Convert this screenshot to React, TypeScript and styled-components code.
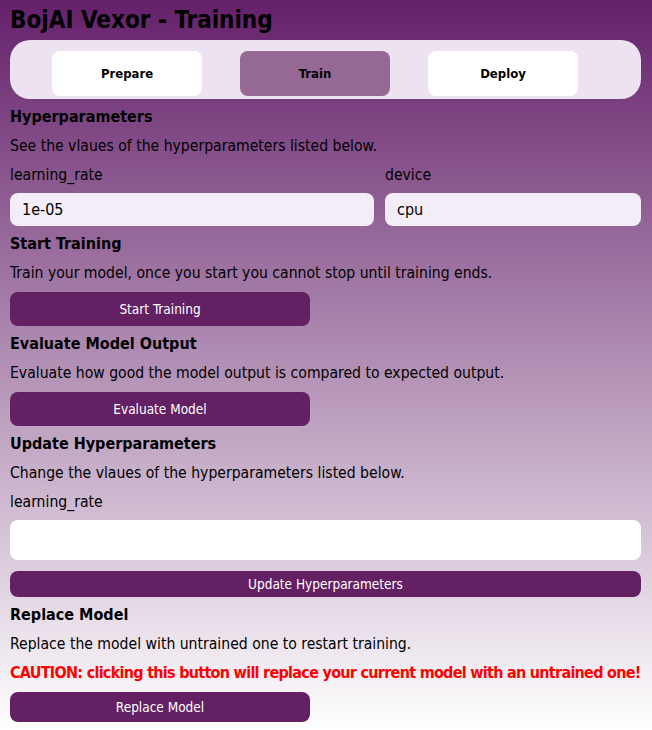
import React from "react";
import styled, { createGlobalStyle } from "styled-components";

const GlobalStyle = createGlobalStyle`
  html, body {
    margin: 0;
    padding: 0;
  }
  body {
    font-family: "DejaVu Sans Condensed", "DejaVu Sans", sans-serif;
    color: #000;
  }
`;

const Page = styled.div`
  min-height: 730px;
  box-sizing: border-box;
  padding: 6px 11px 8px 10px;
  background: linear-gradient(to bottom, #64206a 0%, #ffffff 100%);
`;

const Title = styled.h1`
  margin: 0 0 6px;
  font-size: 24px;
  font-weight: bold;
  line-height: 28px;
`;

const TabBar = styled.nav`
  display: flex;
  gap: 38px;
  height: 59px;
  box-sizing: border-box;
  padding: 11px 0 3px 42px;
  background: #ece2f0;
  border-radius: 20px;
`;

const Tab = styled.button<{ $active?: boolean }>`
  width: 150px;
  height: 45px;
  border: none;
  border-radius: 8px;
  background: ${(p) => (p.$active ? "#966894" : "#ffffff")};
  font-family: inherit;
  font-size: 13px;
  font-weight: bold;
  color: #000;
`;

const Heading = styled.h2`
  margin: 8px 0 0;
  font-size: 16px;
  font-weight: bold;
  line-height: 20px;
`;

const Text = styled.p<{ $warn?: boolean }>`
  margin: 9px 0 0;
  font-size: ${(p) => (p.$warn ? "16px" : "15.6px")};
  line-height: 20px;
  white-space: nowrap;
  color: ${(p) => (p.$warn ? "#ff0000" : "#000")};
  font-weight: ${(p) => (p.$warn ? "bold" : "normal")};
  letter-spacing: ${(p) => (p.$warn ? "-0.72px" : "0")};
`;

const FieldRow = styled.div`
  display: flex;
  gap: 11px;
`;

const Field = styled.label<{ $width?: number }>`
  display: flex;
  flex-direction: column;
  flex: ${(p) => (p.$width ? `0 0 ${p.$width}px` : "1")};
  font-size: 15.6px;
  line-height: 20px;
  margin-top: 9px;
`;

const Input = styled.input<{ $tall?: boolean }>`
  margin-top: 8px;
  height: ${(p) => (p.$tall ? 40 : 33)}px;
  box-sizing: border-box;
  border: none;
  border-radius: 8px;
  padding: 0 12px;
  background: ${(p) => (p.$tall ? "#ffffff" : "#f3edf7")};
  font-family: inherit;
  font-size: 16px;
  color: #000;
  outline: none;
`;

const Action = styled.button<{ $full?: boolean; $h?: number; $gap?: number }>`
  display: block;
  margin-top: ${(p) => p.$gap ?? 9}px;
  width: ${(p) => (p.$full ? "100%" : "300px")};
  height: ${(p) => p.$h ?? 34}px;
  border: none;
  border-radius: 8px;
  background: #632063;
  color: #fff;
  font-family: inherit;
  font-size: 13.5px;
`;

export default function App() {
  return (
    <>
      <GlobalStyle />
      <Page>
        <Title>BojAI Vexor - Training</Title>
        <TabBar>
          <Tab>Prepare</Tab>
          <Tab $active>Train</Tab>
          <Tab>Deploy</Tab>
        </TabBar>

        <Heading>Hyperparameters</Heading>
        <Text>See the vlaues of the hyperparameters listed below.</Text>
        <FieldRow>
          <Field $width={364}>
            learning_rate
            <Input defaultValue="1e-05" />
          </Field>
          <Field>
            device
            <Input defaultValue="cpu" />
          </Field>
        </FieldRow>

        <Heading>Start Training</Heading>
        <Text>Train your model, once you start you cannot stop until training ends.</Text>
        <Action>Start Training</Action>

        <Heading>Evaluate Model Output</Heading>
        <Text>Evaluate how good the model output is compared to expected output.</Text>
        <Action>Evaluate Model</Action>

        <Heading>Update Hyperparameters</Heading>
        <Text>Change the vlaues of the hyperparameters listed below.</Text>
        <Field>
          learning_rate
          <Input $tall />
        </Field>
        <Action $full $h={26} $gap={11}>Update Hyperparameters</Action>

        <Heading>Replace Model</Heading>
        <Text>Replace the model with untrained one to restart training.</Text>
        <Text $warn>CAUTION: clicking this button will replace your current model with an untrained one!</Text>
        <Action $h={30}>Replace Model</Action>
      </Page>
    </>
  );
}
